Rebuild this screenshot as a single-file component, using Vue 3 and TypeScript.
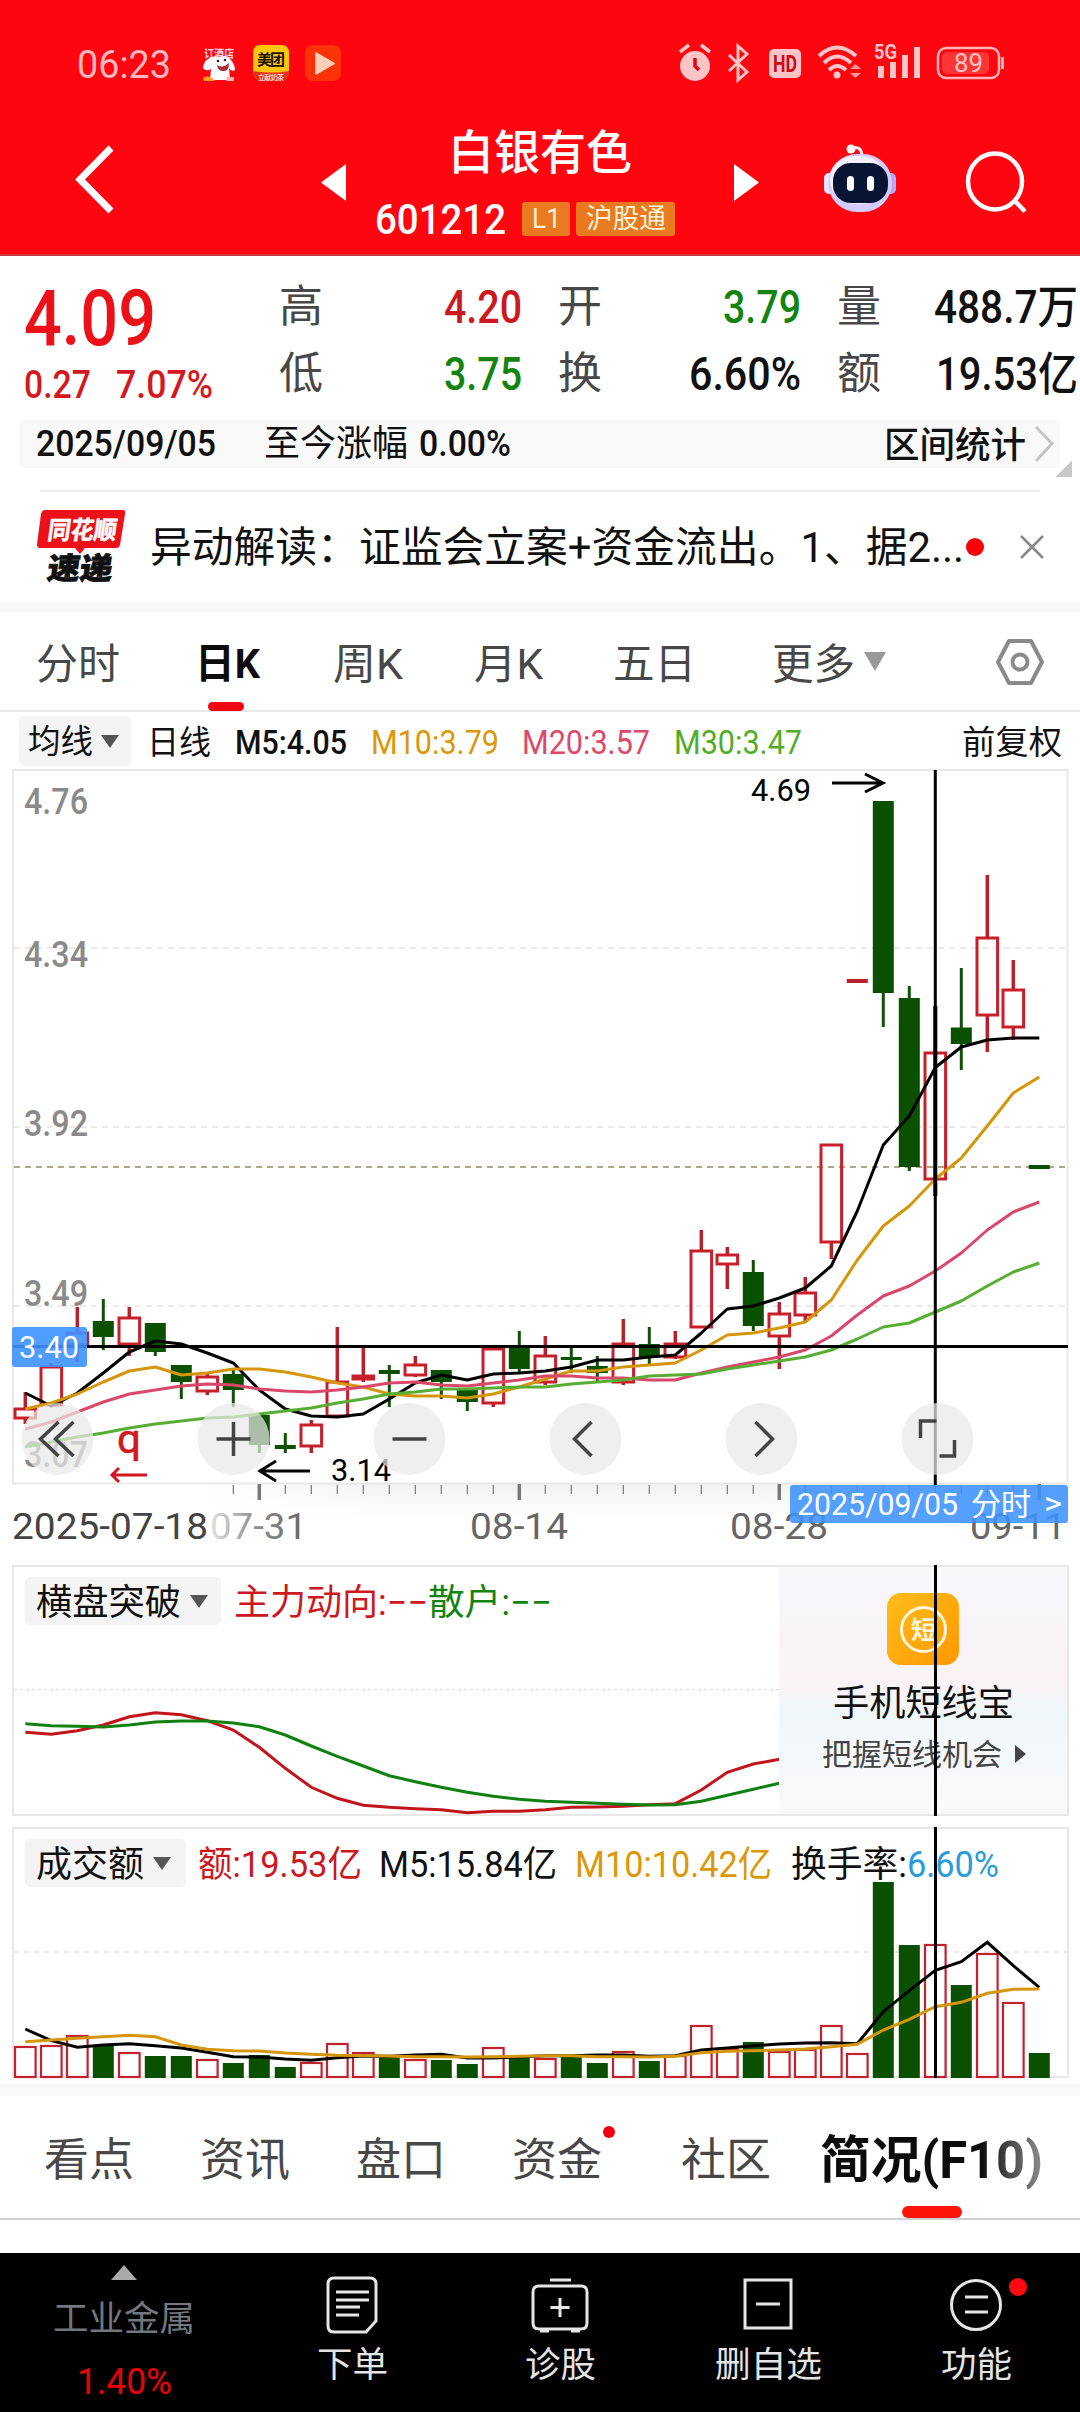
<script setup lang="ts">
import { h, type FunctionalComponent } from 'vue'

interface FitProps { t: string; w: number; s: number }

// One line of text condensed or widened to a fixed advance width.
const Fit: FunctionalComponent<FitProps> = (p) =>
  h('svg', { width: p.w, height: p.s, class: 'fit' }, [
    h('text', {
      x: 0, y: p.s * 0.86, 'font-size': p.s, textLength: p.w,
      lengthAdjust: 'spacingAndGlyphs', fill: 'currentColor',
    }, p.t),
  ])
Fit.props = ['t', 'w', 's']

const X0 = 12.3
const STEP = 26
const cx = (i: number) => X0 + i * STEP
const line = (ys: number[], top: number) =>
  ys.map((y, i) => `${cx(i).toFixed(1)},${(y - top).toFixed(1)}`).join(' ')

type Candle = [up: 0 | 1, top: number, bottom: number, high: number, low: number]
const K_TOP = 770
const candles: Candle[] = [
  [1, 1409, 1418, 1392, 1424], [1, 1367, 1405, 1363, 1405], [1, 1333, 1345, 1307, 1362], [0, 1321, 1337, 1299, 1350],
  [1, 1318, 1344, 1307, 1356], [0, 1323, 1352, 1323, 1356], [0, 1365, 1382, 1365, 1399], [1, 1377, 1391, 1373, 1395],
  [0, 1374, 1390, 1370, 1407], [0, 1415, 1445, 1415, 1453], [0, 1445, 1449, 1433, 1453], [1, 1425, 1446, 1420, 1453],
  [1, 1382, 1416, 1327, 1416], [1, 1376, 1379, 1348, 1382], [0, 1370, 1374, 1365, 1407], [1, 1365, 1375, 1356, 1377],
  [0, 1370, 1382, 1370, 1399], [0, 1390, 1402, 1390, 1411], [1, 1349, 1403, 1349, 1407], [0, 1348, 1369, 1331, 1372],
  [1, 1356, 1382, 1336, 1385], [0, 1357, 1360, 1347, 1373], [0, 1366, 1373, 1356, 1382], [1, 1344, 1382, 1319, 1385],
  [0, 1344, 1357, 1327, 1364], [1, 1344, 1357, 1331, 1359], [1, 1251, 1327, 1230, 1327], [1, 1255, 1264, 1247, 1289],
  [0, 1272, 1326, 1260, 1331], [1, 1314, 1336, 1302, 1369], [1, 1293, 1315, 1277, 1321], [1, 1145, 1242, 1145, 1259],
  [1, 981, 981, 981, 981], [0, 801, 993, 801, 1027], [0, 998, 1167, 986, 1171], [1, 1053, 1179, 1053, 1179],
  [0, 1027.5, 1044, 968, 1070], [1, 938, 1015, 875, 1052], [1, 990, 1027, 960, 1040], [0, 1165, 1169, 1167, 1167],
]
const ma5 = [1393, 1406, 1393, 1373, 1352, 1341, 1344, 1353, 1363, 1390, 1409, 1416, 1417, 1414, 1399, 1383, 1375, 1380, 1374, 1373, 1371, 1367, 1360, 1360, 1357, 1355, 1333, 1309, 1306, 1298, 1288, 1266, 1211, 1145, 1116, 1067.5, 1047, 1040, 1038, 1038]
const ma10 = [1409, 1403, 1394, 1382, 1371, 1367, 1375, 1373, 1369, 1369, 1372, 1377, 1383, 1387, 1394, 1396, 1396, 1398, 1394, 1387, 1379, 1371, 1371, 1367, 1365, 1363, 1350, 1335, 1333, 1328, 1322, 1300, 1260, 1226, 1206, 1179, 1158, 1126, 1093, 1077]
const ma20 = [1429, 1422, 1412, 1402, 1394, 1390, 1386, 1384, 1385, 1389, 1391, 1392, 1390, 1387, 1383, 1382, 1385, 1386, 1383, 1380, 1376, 1376, 1378, 1378, 1380, 1380, 1373, 1367, 1362, 1357, 1350, 1336, 1315, 1296, 1286, 1271, 1253, 1230, 1212, 1202]
const ma30 = [1447, 1442, 1437, 1433, 1428, 1424, 1421, 1418, 1417, 1414, 1411, 1408, 1403, 1399, 1394, 1392, 1389, 1389, 1388, 1387, 1387, 1384, 1382, 1380, 1376, 1375, 1374, 1369, 1365, 1361, 1357, 1350, 1339, 1327, 1323, 1312, 1301, 1286, 1272, 1263]
const maLines = [
  { c: '#000', p: line(ma5, K_TOP) }, { c: '#d6960c', p: line(ma10, K_TOP) },
  { c: '#d9486a', p: line(ma20, K_TOP) }, { c: '#58ae34', p: line(ma30, K_TOP) },
]
const priceLabels = [{ t: '4.76', y: 44 }, { t: '4.34', y: 197 }, { t: '3.92', y: 366 }, { t: '3.49', y: 535.5 }, { t: '3.07', y: 697 }]
const ticks = Array.from({ length: 32 }, (_, i) => i + 8)

const T_TOP = 1565
const trendRaw = (v: number[]) => line(v.map((n) => 1550 + n / 3), T_TOP)
const mainForce = trendRaw([547, 553, 542, 525, 500, 488, 494, 512, 540, 592, 655, 712, 745, 766, 772, 776, 779, 788, 784, 784, 779, 772, 771, 769, 764, 761, 720, 667, 642, 628])
const retail = trendRaw([521, 527, 529, 531, 525, 516, 513, 513, 519, 530, 555, 588, 619, 648, 677, 695, 712, 727, 739, 748, 754, 757, 760, 763, 765, 764, 754, 736, 718, 700])

const V_TOP = 1827
const volTops = [2047, 2046, 2036, 2046, 2053, 2056, 2056, 2060, 2063, 2055, 2067, 2063, 2044, 2053, 2057, 2060, 2060, 2064, 2048, 2057, 2059, 2057, 2063, 2052, 2061, 2056, 2026, 2049, 2042, 2052, 2050, 2026, 2054, 1882, 1945, 1945, 1985, 1954, 2003, 2053]
const volumes = volTops.map((y, i) => ({ y: y - V_TOP, up: candles[i][0] }))
const volRaw = (v: number[]) => line(v.map((n) => 1820 + n / 3), V_TOP)
const vol5 = volRaw([627, 662, 682, 675, 671, 677, 684, 697, 710, 711, 717, 721, 713, 708, 709, 705, 703, 714, 714, 711, 707, 707, 705, 705, 709, 707, 690, 684, 677, 672, 669, 668, 671, 575, 512, 451, 425, 367, 437, 502])
const vol10 = volRaw([665, 660, 655, 650, 646, 650, 675, 688, 692, 693, 699, 703, 706, 707, 708, 710, 710, 711, 710, 709, 707, 707, 710, 710, 711, 709, 698, 694, 692, 690, 687, 680, 673, 630, 598, 560, 547, 520, 508, 507])
</script>

<template>
  <div class="screen">
    <header class="top">
      <div class="status">
        <Fit class="time" t="06:23" :w="94" :s="39" />
        <svg class="app-dog" width="36" height="38" viewBox="0 0 36 38">
          <text x="3" y="14" font-size="11" font-weight="bold" fill="#ffd9d9" textLength="30" lengthAdjust="spacingAndGlyphs">订酒店</text>
          <path d="M7 15Q12 11 18 13Q25 10 30 16Q34 21 34 26Q30 28 28 24L29 36H9L10 25Q5 28 2 24Q3 17 7 15Z" fill="#fff" />
          <path d="M16 21Q22 25 28 19Q28 28 22 27Q17 27 16 21Z" fill="#a8303a" />
          <circle cx="17" cy="17" r="1.300" fill="#222" /><circle cx="24" cy="16" r="1.300" fill="#222" />
          <path d="M2 34Q8 30 14 37H3Z" fill="#ff9f24" /><path d="M26 33H33V37H25Z" fill="#ffb0a8" />
        </svg>
        <svg class="app-mt" width="36" height="36" viewBox="0 0 36 36">
          <rect width="36" height="36" rx="8" fill="#e5331a" /><path d="M0 8Q0 0 8 0H28Q36 0 36 8V26Q18 29 0 26Z" fill="#ffc60a" />
          <text x="4" y="20" font-size="15" font-weight="bold" fill="#181000" textLength="28">美团</text>
          <text x="5" y="34.500" font-size="7" fill="#fff" textLength="26">立献奶茶</text>
        </svg>
        <svg class="app-play" width="36" height="36" viewBox="0 0 36 36">
          <rect width="36" height="36" rx="8" fill="#fb3306" />
          <path d="M11 8L29 18.500L11 29Z" fill="#ffd0b8" stroke="#ffd0b8" stroke-width="1.500" stroke-linejoin="round" />
        </svg>
        <svg class="sys" width="320" height="44" viewBox="0 0 320 44" fill="#ffc4c4" stroke="none">
          <circle cx="15" cy="25" r="15" /><path d="M0 11L9 4M30 11L21 4" stroke="#ffc4c4" stroke-width="3.500" />
          <path d="M15 17V25L19 29" stroke="#e00818" stroke-width="3.500" fill="none" />
          <path d="M49 14L67 31L58 39V5L67 13L49 30" fill="none" stroke="#ffc4c4" stroke-width="3" />
          <rect x="89" y="8" width="32" height="29" rx="5" /><text x="93" y="31" font-size="23" font-weight="bold" fill="#d00818" textLength="24" lengthAdjust="spacingAndGlyphs">HD</text>
          <path d="M139 15Q157 -2 176 15M144 22Q157 9 171 22M149 29Q157 21 166 29" fill="none" stroke="#ffc4c4" stroke-width="4" />
          <circle cx="157" cy="34" r="3.500" /><path d="M170 28L175.500 23L181 28ZM170 32L175.500 37L181 32Z" fill="#ff9a9a" />
          <text x="194" y="18" font-size="20" font-weight="bold" textLength="23" lengthAdjust="spacingAndGlyphs">5G</text>
          <path d="M198 25h6v12h-6zM210 21h6v16h-6zM222 14h6v23h-6zM234 6h6v31h-6z" />
          <rect x="258" y="7" width="61" height="30" rx="8" fill="none" stroke="#ffb4b4" stroke-width="2.500" />
          <rect x="262" y="11" width="47" height="22" rx="5" fill="#ff3434" />
          <text x="274" y="31" font-size="25" textLength="29" lengthAdjust="spacingAndGlyphs">89</text>
        </svg>
        <span class="cell-cap"></span>
      </div>
      <div class="nav">
        <svg class="back" width="41" height="69" viewBox="0 0 41 69"><path d="M35 3L4 34.500L35 66" fill="none" stroke="#fff" stroke-width="7" /></svg>
        <svg class="prev" width="25" height="37" viewBox="0 0 25 37"><path d="M25 0V37L0 18.500Z" fill="#fff" /></svg>
        <div class="title">
          <Fit class="med" t="白银有色" :w="184" :s="47" />
          <div class="code">
            <Fit class="med" t="601212" :w="131" :s="43" />
            <span class="badge b1"><Fit t="L1" :w="29" :s="27" /></span>
            <span class="badge b2"><Fit t="沪股通" :w="80" :s="27" /></span>
          </div>
        </div>
        <svg class="next" width="25" height="37" viewBox="0 0 25 37"><path d="M0 0V37L25 18.500Z" fill="#fff" /></svg>
        <svg class="robot" width="72" height="72" viewBox="0 0 72 72">
          <path d="M27 6Q38 3 38 15" fill="none" stroke="#ffe8f0" stroke-width="3" /><circle cx="27" cy="7" r="4.500" fill="#fff" />
          <rect y="31" width="11" height="21" rx="5" fill="#ece8ff" /><rect x="61" y="31" width="11" height="21" rx="5" fill="#b4aaf4" />
          <rect x="4" y="12" width="64" height="58" rx="29" fill="#d4ccfa" /><rect x="6" y="14" width="56" height="48" rx="25" fill="#f4f0ff" />
          <rect x="9" y="21" width="55" height="40" rx="18" fill="#081434" />
          <rect x="23" y="34" width="7" height="15" rx="3.500" fill="#fff" /><rect x="43" y="34" width="7" height="15" rx="3.500" fill="#fff" />
        </svg>
        <svg class="search" width="64" height="64" viewBox="0 0 64 64" fill="none" stroke="#fff" stroke-width="4.500"><ellipse cx="30" cy="30.500" rx="27" ry="28" /><path d="M49 49L60 60.500" /></svg>
      </div>
    </header>

    <section class="quote">
      <div class="price">
        <Fit class="med" t="4.09" :w="132" :s="77" />
        <div class="chg"><Fit class="med" t="0.27" :w="67" :s="39" /><Fit class="med" t="7.07%" :w="97" :s="39" /></div>
      </div>
      <div class="cell c1"><Fit class="lb" t="高" :w="44" :s="44" /><Fit class="med red" t="4.20" :w="78" :s="46" /></div>
      <div class="cell c2"><Fit class="lb" t="开" :w="44" :s="44" /><Fit class="med green" t="3.79" :w="78" :s="46" /></div>
      <div class="cell c3"><Fit class="lb" t="量" :w="44" :s="44" /><Fit class="med" t="488.7万" :w="144" :s="46" /></div>
      <div class="cell c1"><Fit class="lb" t="低" :w="44" :s="44" /><Fit class="med green" t="3.75" :w="78" :s="46" /></div>
      <div class="cell c2"><Fit class="lb" t="换" :w="44" :s="44" /><Fit class="med" t="6.60%" :w="112" :s="46" /></div>
      <div class="cell c3"><Fit class="lb" t="额" :w="44" :s="44" /><Fit class="med" t="19.53亿" :w="142" :s="46" /></div>
    </section>

    <div class="range">
      <Fit class="med up" t="2025/09/05" :w="180" :s="37" />
      <Fit class="since up" t="至今涨幅" :w="144" :s="36" />
      <Fit class="med pct up" t="0.00%" :w="92" :s="37" />
      <Fit class="stat med" t="区间统计" :w="142" :s="36" />
      <svg width="22" height="38" viewBox="0 0 22 38"><path d="M2 2L18 18.500L2 36" fill="none" stroke="#c4c4c4" stroke-width="3" /></svg>
      <i class="corner"></i>
    </div>

    <div class="news">
      <svg width="90" height="76" viewBox="0 0 90 76">
        <path d="M8 1H86Q89 1 88 5L83 36Q82 39 79 39H48L43 45L38 39H3Q0 39 0 35L4 5Q5 1 8 1Z" fill="#ec1018" />
        <g transform="skewX(-8)" font-weight="bold"><text x="14" y="30" font-size="25" fill="#fff" stroke="#fff" stroke-width=".6" textLength="69" lengthAdjust="spacingAndGlyphs">同花顺</text>
          <text x="19" y="70" font-size="30" font-weight="900" fill="#111" stroke="#111" stroke-width=".8" textLength="65" lengthAdjust="spacingAndGlyphs">速递</text></g>
      </svg>
      <Fit class="news-t" t="异动解读：证监会立案+资金流出。1、据2..." :w="814" :s="42" />
      <i class="dot"></i>
      <svg class="close" width="26" height="26" viewBox="0 0 26 26"><path d="M2 2L24 24M24 2L2 24" stroke="#888" stroke-width="2.500" /></svg>
    </div>
    <div class="band"></div>

    <nav class="ktabs">
      <Fit class="k1" t="分时" :w="84" :s="42" />
      <Fit class="k2 on" t="日K" :w="65" :s="41" />
      <Fit class="k3" t="周K" :w="70" :s="42" />
      <Fit class="k4" t="月K" :w="69" :s="42" />
      <Fit class="k5" t="五日" :w="83" :s="42" />
      <Fit class="k6" t="更多" :w="83" :s="42" />
      <svg class="k7" width="22" height="19"><path d="M0 0H22L11 19Z" fill="#999" /></svg>
      <svg class="k8" width="50" height="48" viewBox="0 0 50 48" fill="none" stroke="#8a8a8a" stroke-width="4"><path d="M14 3H36L47 24L36 45H14L3 24Z" stroke-linejoin="round" /><circle cx="25" cy="24" r="7.500" /></svg>
      <i class="ind"></i>
    </nav>

    <div class="maline">
      <span class="pill"><Fit t="均线" :w="65" :s="33" /><svg width="18" height="13"><path d="M0 0H18L9 13Z" fill="#555" /></svg></span>
      <Fit class="m1" t="日线" :w="64" :s="33" />
      <Fit class="m2 med" t="M5:4.05" :w="112" :s="33" />
      <Fit class="m3 gold" t="M10:3.79" :w="128" :s="33" />
      <Fit class="m3 pink" t="M20:3.57" :w="128" :s="33" />
      <Fit class="m3 lime" t="M30:3.47" :w="128" :s="33" />
      <Fit class="m4" t="前复权" :w="100" :s="33" />
    </div>

    <div class="kchart">
      <svg width="1056" height="782" viewBox="0 0 1056 782">
        <defs>
          <linearGradient id="axis" x1="0" y1="0" x2="0" y2="1"><stop offset="0" stop-color="#f3f3f3" /><stop offset="1" stop-color="#fff" /></linearGradient>
          <linearGradient id="axisFade" x1="0" x2="1"><stop offset="0" stop-color="#fff" /><stop offset="1" stop-color="#fff" stop-opacity="0" /></linearGradient>
          <linearGradient id="fade" x1="0" x2="1"><stop offset="0" stop-color="#e2e2e2" /><stop offset=".45" stop-color="#909090" /><stop offset="1" stop-color="#666" /></linearGradient>
        </defs>
        <rect x="185" y="714" width="870" height="34" fill="url(#axis)" />
        <rect x="184" y="714" width="200" height="35" fill="url(#axisFade)" />
        <rect x="0" y="0" width="1054.500" height="713.500" fill="none" stroke="#e8e8e8" stroke-width="2" />
        <path d="M1 178H1054M1 357H1054M1 536H1054" stroke="#e3e3e3" stroke-width="1.500" stroke-dasharray="6 5" />
        <path d="M1 397H1054" stroke="#96895c" stroke-width="1.500" stroke-dasharray="6 5" />
        <g fill="#8a8a8a" font-size="36" font-weight="500">
          <text v-for="l in priceLabels" :key="l.t" x="11" :y="l.y" textLength="64" lengthAdjust="spacingAndGlyphs">{{ l.t }}</text>
        </g>
        <g v-for="(c, i) in candles" :key="i">
          <path v-if="c[1] === c[2]" :d="`M${cx(i) - 10.5} ${c[1] - 770}H${cx(i) + 10.5}`" stroke="#b8202a" stroke-width="4" />
          <template v-else-if="c[0]">
            <path v-if="c[3] < c[1]" :d="`M${cx(i)} ${c[3] - 770}V${c[1] - 770}`" stroke="#b8202a" stroke-width="3.500" />
            <path v-if="c[4] > c[2]" :d="`M${cx(i)} ${c[2] - 770}V${c[4] - 770}`" stroke="#b8202a" stroke-width="3.500" />
            <rect :x="cx(i) - 10.3" :y="c[1] - 770" width="20.600" :height="c[2] - c[1]" fill="none" stroke="#c8202a" stroke-width="3" />
          </template>
          <template v-else>
            <path :d="`M${cx(i)} ${c[3] - 770}V${c[4] - 770}`" stroke="#0e5206" stroke-width="3" />
            <rect :x="cx(i) - 10.5" :y="c[1] - 770" width="21" :height="c[2] - c[1]" fill="#0b5000" />
          </template>
        </g>
        <polyline v-for="m in maLines" :key="m.c" :points="m.p" fill="none" :stroke="m.c" stroke-width="3" stroke-linejoin="round" />
        <path d="M0 576.500H1055M922.300 0V715" stroke="#000" stroke-width="3" />
        <path d="M922.300 236V426" stroke="#000" stroke-width="4" />
        <g fill="none" stroke="#000" stroke-width="3">
          <path d="M297 701H248M263 691L247 701L263 711" /><path d="M819 13H870M852 4L870 13L852 22" />
          <path d="M134 705H100M106 698L99 705L106 712" stroke="#d01820" />
        </g>
        <text x="104" y="683" font-size="41" fill="#d01820" stroke="#d01820" stroke-width=".6" textLength="24" lengthAdjust="spacingAndGlyphs">q</text>
        <text x="318" y="711" font-size="31" textLength="60" lengthAdjust="spacingAndGlyphs">3.14</text>
        <text x="738" y="31" font-size="31" textLength="60" lengthAdjust="spacingAndGlyphs">4.69</text>
        <template v-for="i in ticks" :key="i">
          <path v-if="i % 10 === 9" :d="`M${cx(i)} 714V730`" stroke="#777" stroke-width="3.500" />
          <path v-else :d="`M${cx(i)} 715V724`" stroke="#777" stroke-width="1.200" />
        </template>
        <g font-size="36" fill="#666">
          <text x="-1" y="769" fill="#444" textLength="196" lengthAdjust="spacingAndGlyphs">2025-07-18</text>
          <text x="197" y="769" fill="url(#fade)" textLength="97" lengthAdjust="spacingAndGlyphs">07-31</text>
          <text x="457" y="769" textLength="98" lengthAdjust="spacingAndGlyphs">08-14</text>
          <text x="717" y="769" textLength="98" lengthAdjust="spacingAndGlyphs">08-28</text>
          <text x="957" y="769" textLength="96" lengthAdjust="spacingAndGlyphs">09-11</text>
        </g>
        <g v-for="n in 6" :key="n" :transform="`translate(${44.5 + (n - 1) * 176} 669)`" fill="none" stroke="#444" stroke-width="3.500">
          <circle r="36" fill="#e9e9e9" fill-opacity=".72" stroke="none" />
          <path v-if="n === 1" d="M1 -17L-17 0L1 17M16 -17L-2 0L16 17" />
          <path v-if="n === 2" d="M-17 0H17M0 -17V17" />
          <path v-if="n === 3" d="M-17 0H17" />
          <path v-if="n === 4" d="M6 -17L-11 0L6 17" />
          <path v-if="n === 5" d="M-6 -17L11 0L-6 17" />
          <path v-if="n === 6" d="M-17 -1V-18H-1M2 17H17V1" />
        </g>
        <rect x="-1" y="557" width="75" height="40" rx="3" fill="#3d92ff" fill-opacity=".9" />
        <text x="6" y="588" font-size="31" fill="#fff" textLength="60" lengthAdjust="spacingAndGlyphs">3.40</text>
        <rect x="777" y="715" width="278" height="38" rx="3" fill="#3d92ff" fill-opacity=".88" />
        <g fill="#fff" font-size="31">
          <text x="784" y="745" textLength="161" lengthAdjust="spacingAndGlyphs">2025/09/05</text><text x="958" y="745" textLength="60" lengthAdjust="spacingAndGlyphs">分时</text><text x="1031" y="744" textLength="18" lengthAdjust="spacingAndGlyphs">&gt;</text>
        </g>
      </svg>
    </div>

    <div class="panel trend">
      <svg class="plot" width="1056" height="251" viewBox="0 0 1056 251">
        <path d="M1 124.500H766" stroke="#e2e2e2" stroke-width="1.500" stroke-dasharray="3 3" />
        <polyline :points="mainForce" fill="none" stroke="#c2141c" stroke-width="3" />
        <polyline :points="retail" fill="none" stroke="#108010" stroke-width="3" />
      </svg>
      <div class="legend">
        <span class="pill p2"><Fit t="横盘突破" :w="145" :s="36" /><svg width="18" height="13"><path d="M0 0H18L9 13Z" fill="#555" /></svg></span>
        <Fit class="l1 red" t="主力动向:−−" :w="194" :s="36" />
        <Fit class="green" t="散户:−−" :w="124" :s="36" />
      </div>
      <div class="promo">
        <svg width="72" height="72" viewBox="0 0 72 72">
          <defs><linearGradient id="og" x2="1" y2="1"><stop offset="0" stop-color="#ffbd1a" /><stop offset="1" stop-color="#ff9800" /></linearGradient></defs>
          <rect width="72" height="72" rx="14" fill="url(#og)" /><circle cx="36.500" cy="36.500" r="22" fill="none" stroke="#fff6dc" stroke-width="3" />
          <text x="24" y="46" font-size="25" font-weight="bold" fill="#fff6dc">短</text>
        </svg>
        <Fit t="手机短线宝" :w="181" :s="36" class="promo-t" />
        <div class="promo-s"><Fit t="把握短线机会" :w="180" :s="30" /><svg width="11" height="18"><path d="M0 0L11 9L0 18Z" fill="#444" /></svg></div>
      </div>
      <i class="cross"></i>
    </div>

    <div class="panel vol">
      <svg class="plot" width="1056" height="251" viewBox="0 0 1056 251">
        <path d="M1 125H1054" stroke="#e4e4e4" stroke-width="1.500" stroke-dasharray="5 5" />
        <template v-for="(v, i) in volumes" :key="i">
          <rect v-if="v.up" :x="cx(i) - 10.3" :y="v.y" width="20.600" :height="250 - v.y" fill="none" stroke="#c2222e" stroke-width="2.200" />
          <rect v-else :x="cx(i) - 10.5" :y="v.y" width="21" :height="251 - v.y" fill="#0b5000" />
        </template>
        <polyline :points="vol5" fill="none" stroke="#000" stroke-width="3" />
        <polyline :points="vol10" fill="none" stroke="#d6960c" stroke-width="3" />
      </svg>
      <div class="legend">
        <span class="pill p3"><Fit t="成交额" :w="108" :s="36" /><svg width="18" height="13"><path d="M0 0H18L9 13Z" fill="#555" /></svg></span>
        <Fit class="v1 red" t="额:19.53亿" :w="164" :s="36" />
        <Fit class="v2" t="M5:15.84亿" :w="178" :s="36" />
        <Fit class="v3 gold" t="M10:10.42亿" :w="197" :s="36" />
        <Fit class="v4" t="换手率:" :w="116" :s="36" />
        <Fit class="blue" t="6.60%" :w="92" :s="36" />
      </div>
      <i class="cross"></i>
    </div>
    <div class="band b-low"></div>

    <nav class="btabs">
      <Fit class="t1" t="看点" :w="90" :s="45" />
      <Fit class="t2" t="资讯" :w="90" :s="45" />
      <Fit class="t3" t="盘口" :w="90" :s="45" />
      <Fit class="t4" t="资金" :w="90" :s="45" />
      <Fit class="t5" t="社区" :w="90" :s="45" />
      <Fit class="t6" t="简况(F10)" :w="223" :s="51" />
      <i class="t-dot"></i><i class="t-ind"></i><i class="t-fade"></i>
    </nav>

    <footer class="foot">
      <div class="ind-cell">
        <svg width="26" height="15"><path d="M0 15H26L13 0Z" fill="#aaa" /></svg>
        <Fit class="ig" t="工业金属" :w="142" :s="35" />
        <Fit class="ip" t="1.40%" :w="95" :s="37" />
      </div>
      <div class="f-cell">
        <svg width="60" height="60" viewBox="0 0 60 60"><path d="M12 3H48Q54 3 54 9V46L44 57H12Q6 57 6 51V9Q6 3 12 3Z" /><path d="M14 17H47M14 25H47M14 32H38M14 40H37" /></svg>
        <Fit t="下单" :w="71" :s="35" />
      </div>
      <div class="f-cell">
        <svg width="60" height="60" viewBox="0 0 60 60"><path d="M20 5H41M9 11H51Q57 11 57 17V48Q57 54 51 54H9Q3 54 3 48V17Q3 11 9 11ZM10 56H19M41 56H50M30 23V42M20.500 32.500H39.500" /></svg>
        <Fit t="诊股" :w="71" :s="35" />
      </div>
      <div class="f-cell">
        <svg width="60" height="60" viewBox="0 0 60 60"><path d="M7 5H53V53H7ZM18 29H42" /></svg>
        <Fit t="删自选" :w="107" :s="35" />
      </div>
      <div class="f-cell">
        <svg width="60" height="60" viewBox="0 0 60 60"><circle cx="30" cy="30" r="24.500" /><path d="M19 22H42M19 37H42" /></svg>
        <Fit t="功能" :w="71" :s="35" />
        <i class="f-dot"></i>
      </div>
    </footer>
  </div>
</template>

<style>
body { margin: 0; background: #fff; }
</style>

<style scoped>
.screen { width: 1080px; height: 2412px; overflow: hidden; background: #fff; color: #111; font-family: Roboto, "Noto Sans CJK SC", sans-serif; display: flex; flex-direction: column; position: relative; }
.screen > * { flex-shrink: 0; box-sizing: border-box; }
svg { display: block; flex-shrink: 0; overflow: visible; }
.fit { overflow: visible; flex-shrink: 0; display: block; }
i { flex-shrink: 0; }
.med { font-weight: 500; }
.red { color: #cc1820; }
.green { color: #148410; }
.gold { color: #dc9808; }
.pink { color: #df4868; }
.lime { color: #50ae28; }
.blue { color: #2c9cd8; }

.top { height: 256px; background: #ff0510; border-bottom: 2px solid #c83a40; color: #fff; }
.status { height: 126px; display: flex; align-items: center; padding-left: 77px; position: relative; }
.time { color: #ffb8bc; }
.app-dog { margin-left: 30px; }
.app-mt { margin-left: 16px; }
.app-play { margin-left: 16px; }
.sys { margin-left: 339px; }
.cell-cap { width: 3px; height: 12px; background: #ffb4b4; margin-left: 1px; }
.nav { height: 126px; display: flex; align-items: flex-start; padding-top: 2px; }
.back { margin: 17px 0 0 76px; }
.prev { margin: 36px 0 0 204px; }
.title { width: 302px; margin-left: 28px; display: flex; flex-direction: column; align-items: center; }
.title > .fit { margin: 1px 0 0 30px; }
.code { display: flex; align-items: center; margin-top: 21px; width: 300px; height: 43px; }
.badge { height: 34px; background: #ea7a20; border-radius: 3px; color: #fff2d8; display: flex; align-items: center; justify-content: center; }
.b1 { width: 48px; margin-left: 16px; flex-shrink: 0; }
.b2 { width: 99px; margin-left: 6px; flex-shrink: 0; }
.next { margin: 36px 0 0 58px; }
.robot { margin: 14px 0 0 65px; }
.search { margin: 23px 0 0 69px; }

.quote { height: 163px; display: grid; grid-template-columns: 280px 242px 279px 279px; grid-template-rows: 67px 67px; padding-top: 17px; }
.price { grid-row: 1 / 3; padding: 6px 0 0 24px; color: #ec1018; }
.chg { display: flex; gap: 25px; margin-top: 8px; color: #d41822; }
.cell { display: flex; align-items: center; justify-content: space-between; margin-top: -1px; }
.cell .lb { margin-left: -1px; }
.c2 { padding-left: 37px; }
.c3 { padding: 0 2px 0 37px; }
.lb { color: #484848; }

.range { margin: 0 20px 0 19px; height: 49px; background: #f9f9f9; border-radius: 6px; display: flex; align-items: center; padding-left: 17px; position: relative; }
.up { margin-bottom: 2px; }
.since { margin-left: 48px; }
.pct { margin-left: 11px; }
.stat { margin: 3px 8px 0 373px; }
.corner { position: absolute; left: 1036px; top: 41px; width: 17px; height: 17px; background: linear-gradient(135deg, transparent 50%, #c8c8c8 50%); }

.news { margin: 22px 40px 0 40px; border-top: 2px solid #ececec; height: 112px; display: flex; align-items: center; position: relative; }
.news > svg:first-child { margin-left: -3px; }
.news-t { margin-left: 23px; }
.dot { width: 18px; height: 18px; border-radius: 50%; background: #fc0008; margin-left: 2px; }
.close { margin-left: 35px; }
.band { height: 11px; background: #f9f9f9; }

.ktabs { height: 99px; border-bottom: 2px solid #e9e9e9; display: flex; align-items: center; color: #484848; position: relative; }
.ktabs .fit { margin-top: 4px; }
.k1 { margin-left: 36px; }
.k2 { margin-left: 75px; }
.on { color: #0c0c0c; font-weight: bold; }
.k3 { margin-left: 73px; }
.k4 { margin-left: 71px; }
.k5 { margin-left: 70px; }
.k6 { margin-left: 76px; }
.k7 { margin-left: 9px; }
.k8 { margin-left: 109px; }
.ind { position: absolute; left: 208px; top: 89px; width: 36px; height: 9px; border-radius: 5px; background: #f0060e; }

.maline { height: 58px; display: flex; align-items: center; padding-left: 19px; color: #111; }
.maline > .fit { margin-top: 2px; }
.pill { background: #f4f4f4; border-radius: 5px; height: 50px; width: 112px; box-sizing: border-box; padding-left: 9px; display: flex; align-items: center; gap: 8px; color: #111; flex-shrink: 0; }
.m1 { margin-left: 16px; }
.m2 { margin-left: 24px; }
.m3 { margin-left: 23.5px; }
.m4 { margin-left: 160px; }

.kchart { padding-left: 13px; height: 795px; }
.panel { margin-left: 12px; width: 1057px; height: 251px; border: 2px solid #e8e8e8; position: relative; }
.plot { position: absolute; left: 1px; top: 0; margin: -2px; }
.legend { position: relative; display: flex; align-items: center; height: 48px; margin: 10px 0 0 11px; }
.legend .fit { margin-top: 2px; }
.pill.p2 { width: 196px; height: 48px; padding-left: 11px; gap: 9px; }
.pill.p3 { width: 161px; height: 48px; padding-left: 11px; gap: 9px; }
.l1 { margin-left: 13px; }
.promo { position: absolute; right: 0; top: 0; width: 288px; height: 247px; background: linear-gradient(180deg, #f8f8fb 0, #f8f4f8 30%, #fbf3f6 45%, #f0f7f9 60%, #f5f8fa 80%, #fafafa 100%); display: flex; flex-direction: column; align-items: center; padding-top: 26px; box-sizing: border-box; color: #111; }
.promo-t { margin: 20px 0 0 1px; }
.promo-s { display: flex; gap: 13px; align-items: center; margin: 18px 0 0 1px; color: #444; }
.cross { position: absolute; left: 920px; top: -2px; width: 3px; height: 251px; background: #000; }
.vol { margin-top: 11px; }
.v1 { margin-left: 12px; }
.v2 { margin-left: 17px; }
.v3 { margin-left: 18px; }
.v4 { margin-left: 19px; }
.b-low { margin-top: 5px; height: 13px; }

.btabs { height: 124px; border-bottom: 2px solid #d0d0d0; display: flex; align-items: center; color: #484848; position: relative; }
.btabs .fit { margin-bottom: -4px; }
.t1 { margin-left: 44px; }
.t2, .t3, .t4 { margin-left: 66px; }
.t5 { margin-left: 79px; }
.t6 { margin-left: 49px; font-weight: bold; color: #0c0c0c; }
.t-dot { position: absolute; left: 603px; top: 30px; width: 12px; height: 12px; border-radius: 50%; background: #f0000c; }
.t-ind { position: absolute; left: 902px; top: 110px; width: 60px; height: 12px; border-radius: 6px; background: #ff140c; }
.t-fade { position: absolute; right: 0; top: 20px; width: 100px; height: 85px; background: linear-gradient(90deg, rgba(255,255,255,0), rgba(255,255,255,.85)); }

.foot { margin-top: 33px; flex: 1; background: #000; display: flex; color: #e4e4e4; }
.ind-cell { width: 248px; display: flex; flex-direction: column; align-items: center; padding-top: 12px; }
.ig { color: #72767e; margin-top: 21px; }
.ip { color: #ec0008; margin-top: 26px; }
.f-cell { width: 208px; display: flex; flex-direction: column; align-items: center; padding-top: 22px; position: relative; }
.f-cell svg:first-child { fill: none; stroke: #e6e6e6; stroke-width: 3; }
.f-cell .fit { margin-top: 12px; }
.f-dot { position: absolute; left: 137px; top: 25px; width: 18px; height: 18px; border-radius: 50%; background: #ff0a10; }
</style>
